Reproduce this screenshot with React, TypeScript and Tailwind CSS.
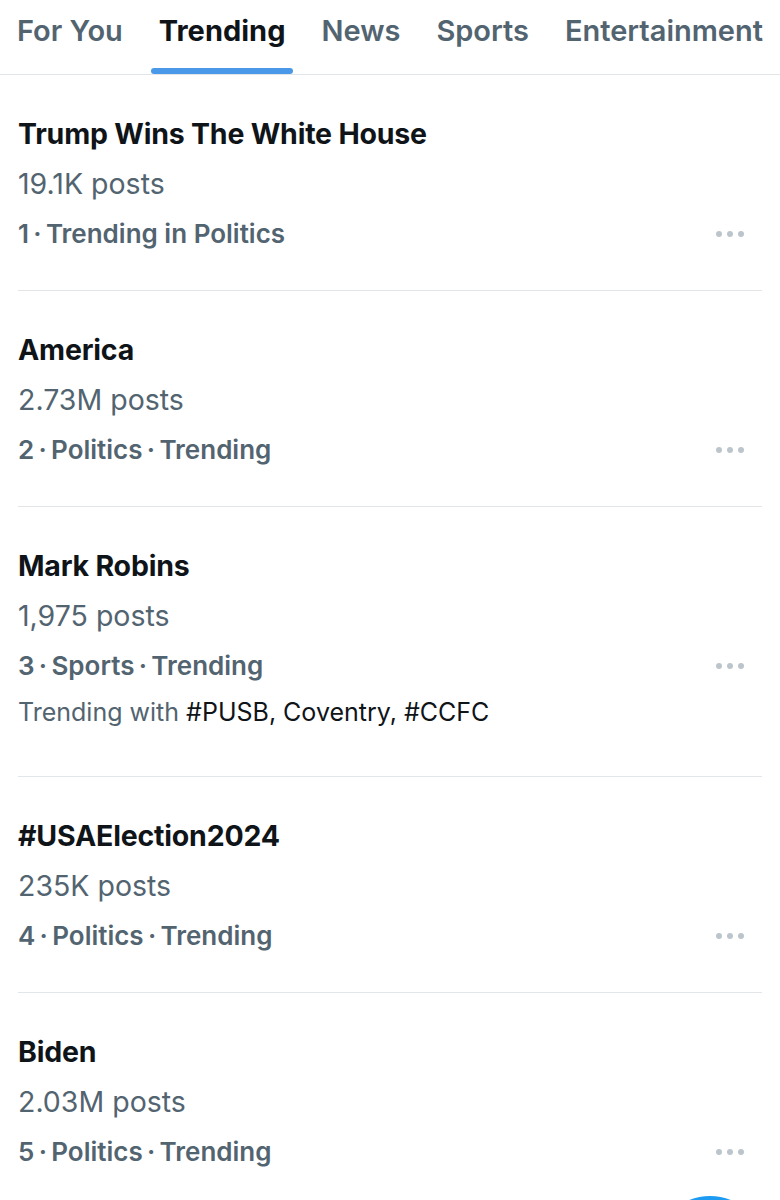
import { useState } from 'react';

interface Trend {
    title: string;
    posts: string;
    meta: string;
    trendingWith?: string;
}

const tabs = ['For You', 'Trending', 'News', 'Sports', 'Entertainment'];

const trends: Trend[] = [
    { title: 'Trump Wins The White House', posts: '19.1K posts', meta: '1\u2009·\u2009Trending in Politics' },
    { title: 'America', posts: '2.73M posts', meta: '2\u2009·\u2009Politics\u2009·\u2009Trending' },
    {
        title: 'Mark Robins',
        posts: '1,975 posts',
        meta: '3\u2009·\u2009Sports\u2009·\u2009Trending',
        trendingWith: '#PUSB, Coventry, #CCFC',
    },
    { title: '#USAElection2024', posts: '235K posts', meta: '4\u2009·\u2009Politics\u2009·\u2009Trending' },
    { title: 'Biden', posts: '2.03M posts', meta: '5\u2009·\u2009Politics\u2009·\u2009Trending' },
];

const MoreDots = () => (
    <div className="flex items-center gap-[5px]">
        <span className="h-[6px] w-[6px] rounded-full bg-[#bcc5cc]" />
        <span className="h-[6px] w-[6px] rounded-full bg-[#bcc5cc]" />
        <span className="h-[6px] w-[6px] rounded-full bg-[#bcc5cc]" />
    </div>
);

const TrendRow = ({ trend }: { trend: Trend }) => (
    <div className="border-b border-[#e3e6e8] pt-[34px] pb-[31px]">
        <p className="h-[50px] text-[28.5px] leading-[50px] font-bold tracking-[-0.2px] text-[#0f1419]">
            {trend.title}
        </p>
        <p className="h-[50px] text-[28.5px] leading-[50px] text-[#536471]">{trend.posts}</p>
        <div className="flex h-[50px] items-center justify-between pr-[18px]">
            <p className="text-[26px] leading-[50px] font-semibold text-[#536471]">{trend.meta}</p>
            <MoreDots />
        </div>
        {trend.trendingWith && (
            <p className="mb-[12px] h-[42px] text-[25px] leading-[42px] text-[#536471]">
                Trending with <span className="text-[#0f1419]">{trend.trendingWith}</span>
            </p>
        )}
    </div>
);

export default function App() {
    const [active, setActive] = useState('Trending');

    return (
        <div className="relative h-[1200px] w-[780px] overflow-hidden bg-white font-['Inter',sans-serif]">
            <div className="flex h-[75px] items-stretch justify-between border-b border-[#e3e6e8] px-[9px]">
                {tabs.map((tab) => (
                    <button
                        key={tab}
                        onClick={() => setActive(tab)}
                        className="relative flex flex-col items-center justify-center px-[8px]"
                    >
                        <span
                            className={
                                active === tab
                                    ? 'pb-[13px] text-[29px] font-bold text-[#0f1419]'
                                    : 'pb-[13px] text-[29px] font-semibold text-[#536471]'
                            }
                        >
                            {tab}
                        </span>
                        {active === tab && (
                            <span className="absolute bottom-0 left-0 right-0 h-[6px] rounded-full bg-[#4a99e9]" />
                        )}
                    </button>
                ))}
            </div>

            <div className="mx-[18px]">
                {trends.map((trend) => (
                    <TrendRow key={trend.title} trend={trend} />
                ))}
            </div>

            <div className="absolute left-[654px] top-[1196px] h-[112px] w-[112px] rounded-full bg-[#1d9bf0]" />
        </div>
    );
}
